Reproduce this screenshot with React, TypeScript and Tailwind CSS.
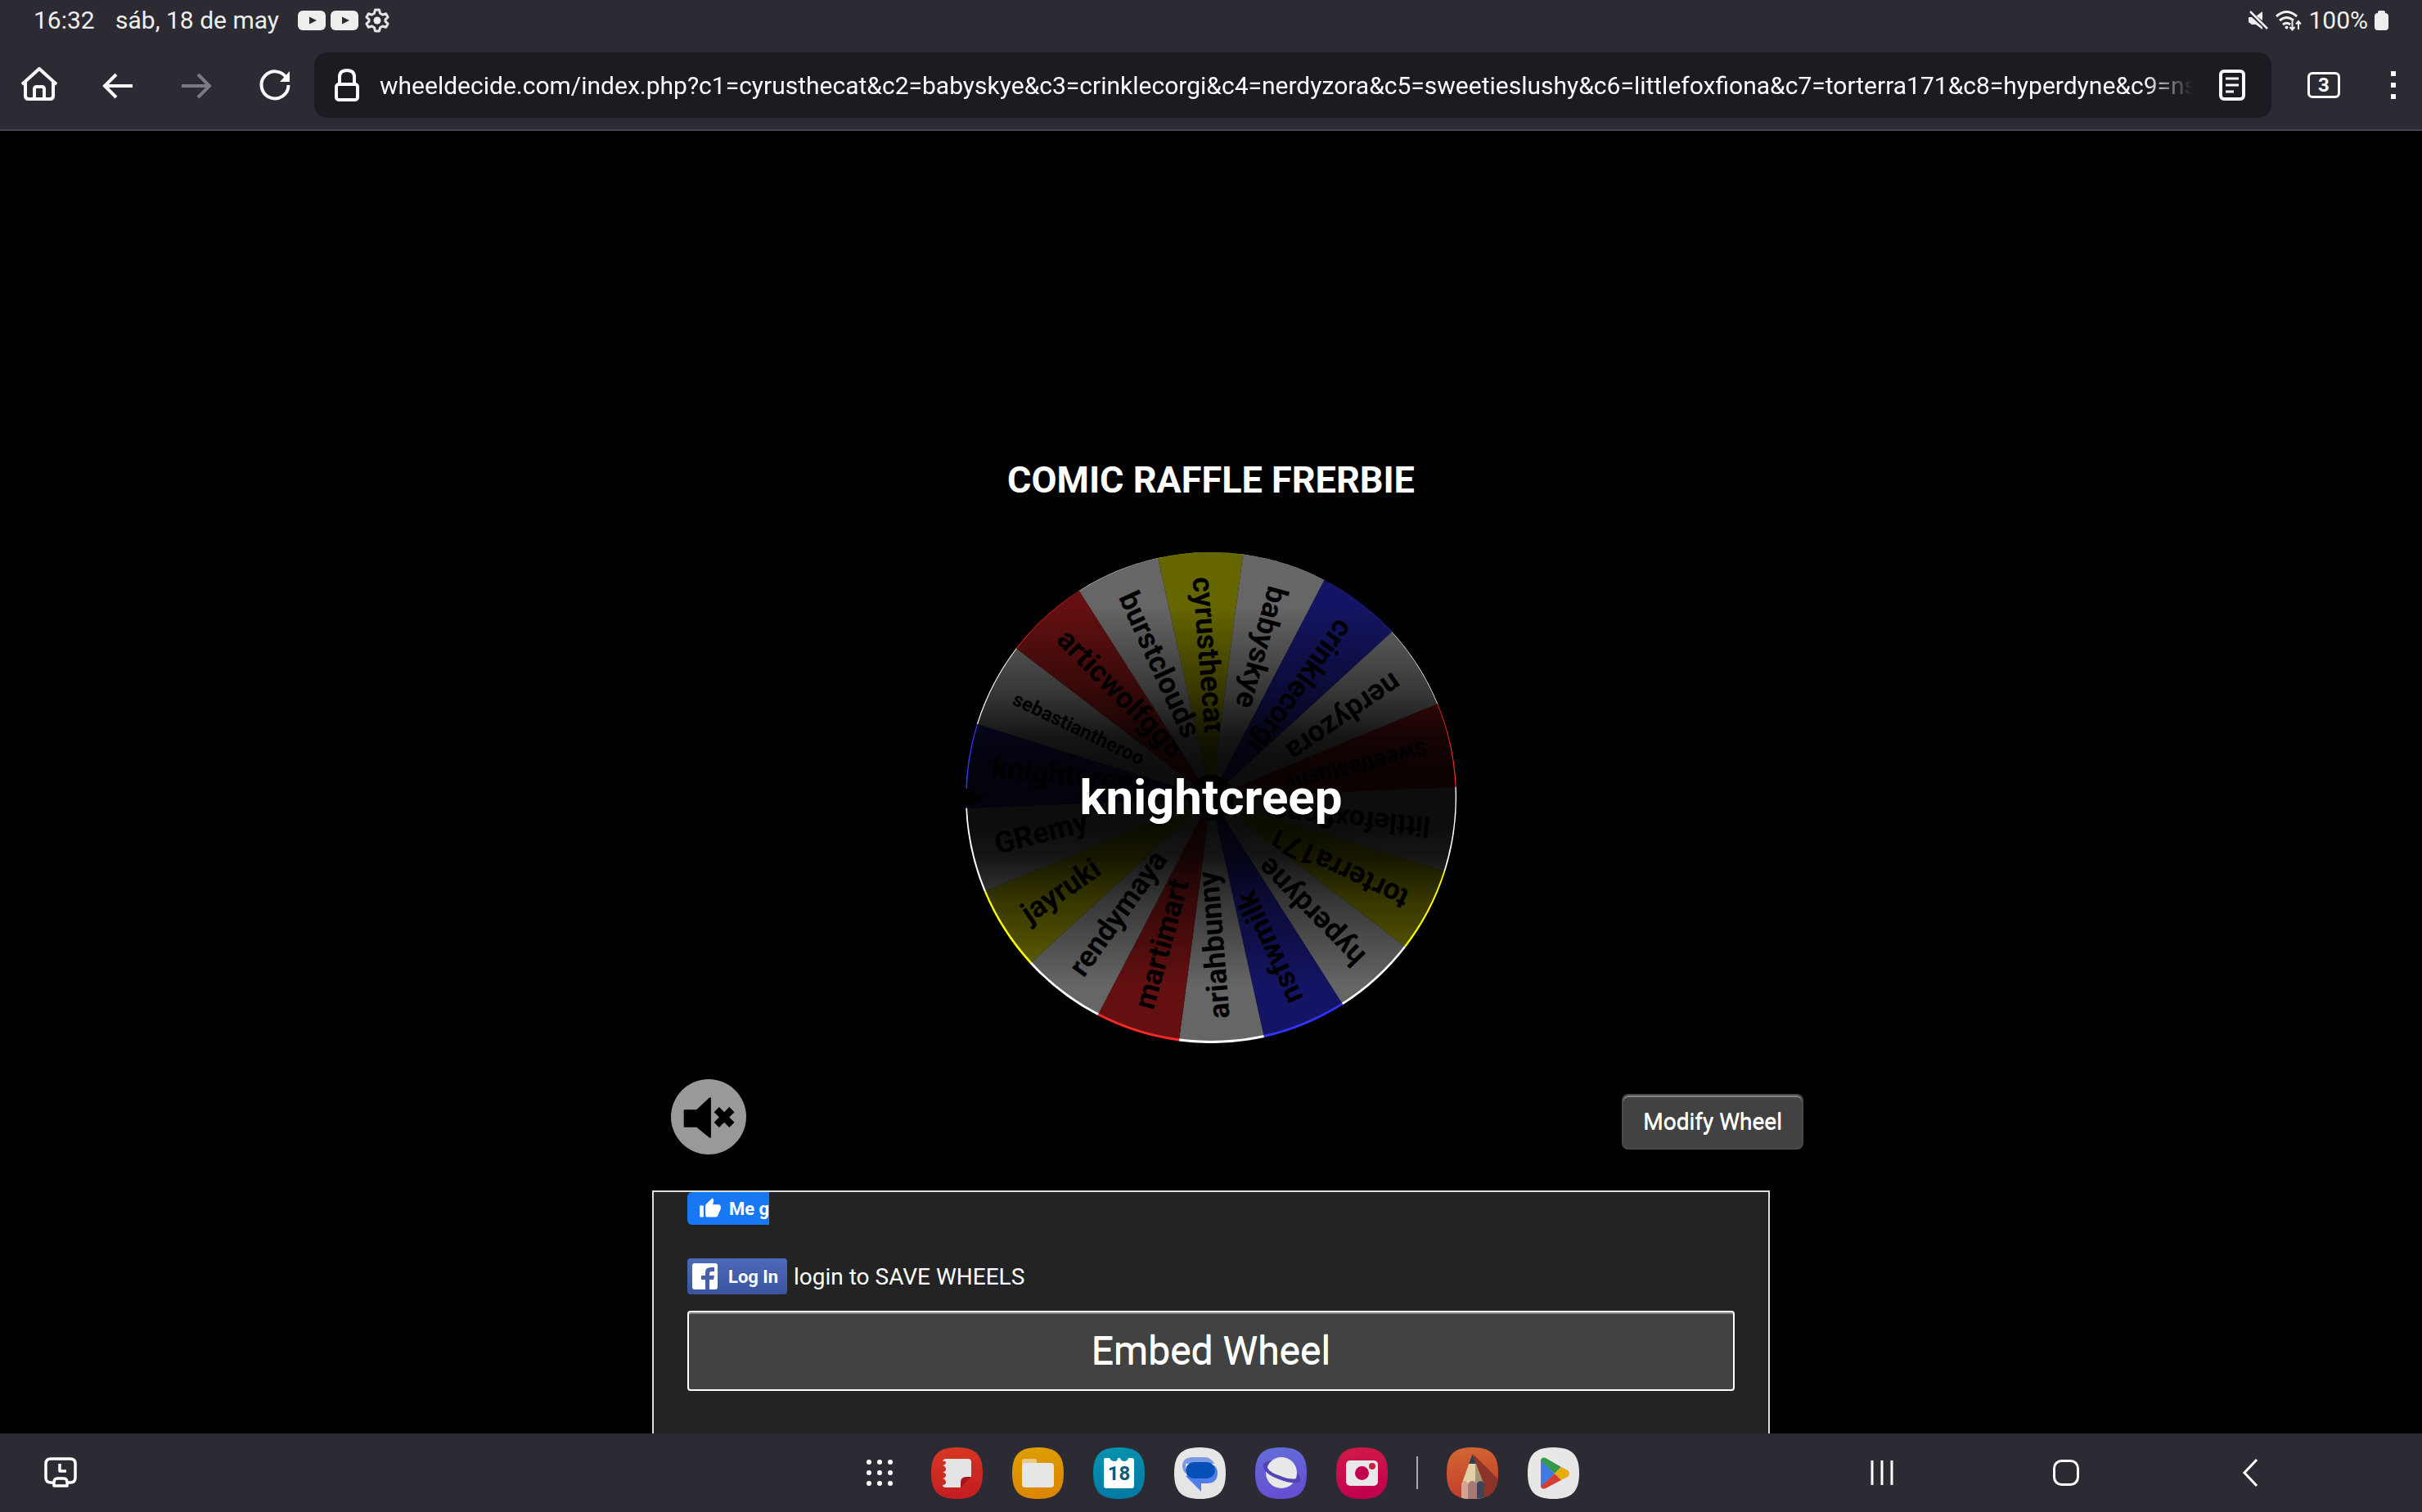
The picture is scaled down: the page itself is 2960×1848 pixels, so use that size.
import { useState } from "react";
import type { ReactNode } from "react";
import { MdThumbUp } from "react-icons/md";

interface Segment {
  name: string;
  color: string;
  size: number;
}

const YELLOW = "#ffff00";
const WHITE = "#ffffff";
const BLUE = "#3333fb";
const RED = "#fb2828";

const segments: Segment[] = [
  { name: "cyrusthecat", color: YELLOW, size: 36 },
  { name: "babyskye", color: WHITE, size: 36 },
  { name: "crinklecorgi", color: BLUE, size: 36 },
  { name: "nerdyzora", color: WHITE, size: 36 },
  { name: "sweetieslushy", color: RED, size: 28 },
  { name: "littlefoxfiona", color: WHITE, size: 34 },
  { name: "torterra171", color: YELLOW, size: 36 },
  { name: "hyperdyne", color: WHITE, size: 36 },
  { name: "nsfwmilk", color: BLUE, size: 36 },
  { name: "ariahbunny", color: WHITE, size: 36 },
  { name: "martimart", color: RED, size: 36 },
  { name: "rendymaya", color: WHITE, size: 36 },
  { name: "jayruki", color: YELLOW, size: 36 },
  { name: "GRemy", color: WHITE, size: 36 },
  { name: "knightcreep", color: BLUE, size: 36 },
  { name: "sebastiantheroo", color: WHITE, size: 24 },
  { name: "articwolfgg8", color: RED, size: 36 },
  { name: "burstclouds", color: WHITE, size: 36 },
];

const url =
  "wheeldecide.com/index.php?c1=cyrusthecat&c2=babyskye&c3=crinklecorgi&c4=nerdyzora&c5=sweetieslushy&c6=littlefoxfiona&c7=torterra171&c8=hyperdyne&c9=nsfwmilk&c10=ariahbunny";

function StatusBar() {
  return (
    <div className="flex h-12 items-center justify-between px-[41px] pt-px text-[30px] leading-none text-[#eeeeee]">
      <div className="flex items-center">
        <span className="w-[100px]">16:32</span>
        <span className="w-[223px]">sáb, 18 de may</span>
        <div className="flex items-center gap-[6px]">
          <PlayBadge />
          <PlayBadge />
          <svg width="32" height="32" viewBox="0 0 32 32" className="ml-px">
            <path
              d="M13.500 3h5l1 4.200 3 1.800 4.200-1.300 2.400 4.200L26 14.800v2.400l3.100 2.900-2.400 4.200-4.200-1.300-3 1.800-1 4.200h-5l-1-4.200-3-1.800-4.200 1.300-2.400-4.200L6 17.200v-2.400l-3.100-2.900 2.400-4.200L9.500 9l3-1.800z"
              fill="none"
              stroke="#e4e4e4"
              strokeWidth="3"
              strokeLinejoin="round"
            />
            <circle cx="16" cy="16" r="4.500" fill="#eee" />
          </svg>
        </div>
      </div>
      <div className="flex items-center">
        <svg width="24" height="24" viewBox="0 0 24 24" fill="#eee" className="mr-[9px]">
          <path d="M17 1v11L9.500 6.500zM0 8h4l13 12v3l-8-6H4l-4-3z" />
          <path d="M2 1l21 21" stroke="#eee" strokeWidth="2.500" />
        </svg>
        <svg width="32" height="26" viewBox="0 0 32 26" fill="none" stroke="#eee" strokeWidth="3" className="mr-2">
          <path d="M1 8q12.500-11 25 0M5 13q8.500-7 17 0M9 18q4.500-3.500 9 0" />
          <circle cx="13.500" cy="21.500" r="2" fill="#eee" stroke="none" />
          <path d="M20.500 14v10M17.500 21l3 3.500 3-3.500M28 24V14M25 17.500l3-3.500 3 3.500" strokeWidth="2" />
        </svg>
        <span>100%</span>
        <svg width="17" height="24" viewBox="0 0 17 24" fill="#eee" className="ml-2">
          <rect x="4" y="0" width="9" height="6" rx="2" />
          <rect y="3" width="17" height="21" rx="4" />
        </svg>
      </div>
    </div>
  );
}

function PlayBadge() {
  return (
    <svg width="34" height="24" viewBox="0 0 34 24">
      <rect width="34" height="24" rx="6" fill="#eee" />
      <path d="M14 7.500l9 4.500-9 4.500z" fill="#2c2b33" />
    </svg>
  );
}

function Toolbar() {
  const [address, setAddress] = useState(url);

  return (
    <div className="flex h-28 items-center border-b-2 border-[#47464d] pt-[2px] text-[#fbfbfe]">
      <div className="grid w-[384px] grid-cols-4">
        <ToolButton label="Inicio">
          <path d="M1 21L22 2l21 19M5 18v17q0 4 4 4h26q4 0 4-4V18M16 38V27q0-3 3-3h6q3 0 3 3v11" />
        </ToolButton>
        <ToolButton label="Atrás">
          <path d="M40 23H6M20 9L6 23l14 14" />
        </ToolButton>
        <ToolButton label="Adelante" dim>
          <path d="M4 23h34M24 9l14 14-14 14" />
        </ToolButton>
        <ToolButton label="Recargar">
          <path d="M37 15A16.500 16.500 0 1 0 38.500 22" />
          <path d="M40 5v13H28z" fill="currentColor" stroke="none" />
        </ToolButton>
      </div>
      <div className="flex h-20 flex-1 items-center rounded-2xl bg-[#1c1b22] pl-[25px] pr-8">
        <svg width="30" height="40" viewBox="0 0 30 40" fill="none" stroke="currentColor" strokeWidth="4" className="mr-[25px]">
          <path d="M6 19V10q0-8 9-8t9 8v9" />
          <rect x="2" y="19" width="26" height="19" rx="3" />
        </svg>
        <input
          type="text"
          aria-label="Dirección"
          value={address}
          onChange={(e) => setAddress(e.target.value)}
          className="h-12 min-w-0 flex-1 bg-transparent text-[30px] outline-none [mask-image:linear-gradient(to_right,black_calc(100%_-_60px),transparent)]"
        />
        <button aria-label="Modo lectura" className="ml-8">
          <svg width="32" height="38" viewBox="0 0 32 38" fill="none" stroke="currentColor" strokeWidth="4">
            <rect x="2" y="2" width="28" height="34" rx="4" />
            <path d="M8 11h16M8 19h16M8 27h10" strokeWidth="3" />
          </svg>
        </button>
      </div>
      <button
        aria-label="Pestañas"
        className="ml-11 flex h-8 w-10 items-center justify-center rounded-md border-[3px] border-[#fbfbfe] text-[24px] leading-none font-bold"
      >
        3
      </button>
      <button aria-label="Menú" className="mr-8 ml-[62px] flex flex-col gap-2">
        <span className="size-[6px] bg-[#fbfbfe]" />
        <span className="size-[6px] bg-[#fbfbfe]" />
        <span className="size-[6px] bg-[#fbfbfe]" />
      </button>
    </div>
  );
}

function ToolButton({ label, dim, children }: { label: string; dim?: boolean; children: ReactNode }) {
  return (
    <button aria-label={label} className={dim ? "flex justify-center text-[#7b7982]" : "flex justify-center"}>
      <svg width="44" height="44" viewBox="0 0 44 44" fill="none" stroke="currentColor" strokeWidth="4">
        {children}
      </svg>
    </button>
  );
}

function Wheel({ winner }: { winner: string }) {
  const step = 360 / segments.length;
  const half = (step / 2) * (Math.PI / 180);
  const x = 300 * Math.sin(half);
  const y = -300 * Math.cos(half);

  return (
    <div className="relative size-[600px]">
      <svg viewBox="-300 -300 600 600" className="size-full">
        <defs>
          <linearGradient id="shade" x1="0" y1="0" x2="0" y2="1">
            <stop offset="0.11" stopColor="#000" stopOpacity="0.6" />
            <stop offset="0.29" stopColor="#000" stopOpacity="0.79" />
            <stop offset="0.38" stopColor="#000" stopOpacity="0.92" />
            <stop offset="0.44" stopColor="#000" stopOpacity="0.95" />
            <stop offset="0.56" stopColor="#000" stopOpacity="0.95" />
            <stop offset="0.62" stopColor="#000" stopOpacity="0.92" />
            <stop offset="0.71" stopColor="#000" stopOpacity="0.79" />
            <stop offset="0.89" stopColor="#000" stopOpacity="0.6" />
          </linearGradient>
        </defs>
        {segments.map((segment, index) => (
          <g key={segment.name} transform={`rotate(${index * step - 2.5})`}>
            <path d={`M0 0L${-x} ${y}A300 300 0 0 1 ${x} ${y}Z`} fill={segment.color} />
            <text
              transform="translate(-2 -270) rotate(88)"
              y="9"
              fontSize={segment.size}
              fontWeight="700"
            >
              {segment.name}
            </text>
          </g>
        ))}
        <circle r="28" />
        <path d="M-300-12l24 12-24 12z" />
        <circle cx="0.2" cy="-1.5" r="298.5" fill="url(#shade)" />
      </svg>
      <div className="absolute inset-0 flex items-center justify-center text-[60px] leading-none font-bold text-white [text-shadow:0_0_4px_black]">
        {winner}
      </div>
    </div>
  );
}

function MuteButton() {
  return (
    <button aria-label="Mute" className="size-[92px] rounded-full bg-[#999999]">
      <svg viewBox="0 0 94 94">
        <path d="M16 39q0-1 1-1h15l16-15q2-1 2 1v48q0 2-2 1L32 60H17q-1 0-1-1z" />
        <path d="M57 38l19 19M76 38L57 57" stroke="#000" strokeWidth="9" />
      </svg>
    </button>
  );
}

function SharePanel() {
  return (
    <section className="flex-1 border-2 border-b-0 border-[#dddddd] bg-[#232323] px-[41px] text-white">
      <button className="flex h-10 w-[100px] items-center overflow-hidden rounded-l-md bg-[#1877f2] pl-[14px] text-[22px] font-bold whitespace-nowrap">
        <MdThumbUp className="mr-[9px] size-7 shrink-0" />
        Me g
      </button>
      <div className="mt-[41px] flex items-center gap-2">
        <button className="flex h-11 w-[122px] items-center gap-[13px] rounded bg-linear-to-b from-[#4c69ba] to-[#3b55a0] pl-[6px] text-[22px] font-bold [text-shadow:0_-1px_0_#354c8c]">
          <svg width="31" height="32" viewBox="0 0 31 32">
            <rect width="31" height="32" rx="3" fill="#fff" />
            <path d="M16 32V20h-5v-5h5v-4q0-6 7-6h4v5h-3q-3 0-3 3v2h6l-1 5h-5v12z" fill="#4560ad" />
          </svg>
          Log In
        </button>
        <span className="pt-[2px] text-[28px]">login to SAVE WHEELS</span>
      </div>
      <button className="mt-5 h-[98px] w-full rounded border-2 border-white bg-[#424242] text-[48px] [box-shadow:inset_0_2px_0_#858585] [text-shadow:0_1px_0_white]">
        Embed Wheel
      </button>
    </section>
  );
}

function AppIcon({ label, from, to, children }: { label: string; from: string; to: string; children: ReactNode }) {
  return (
    <button aria-label={label}>
      <svg width="63" height="63" viewBox="0 0 63 63">
        <defs>
          <linearGradient id={label} x1="0" y1="0" x2="0.2" y2="1">
            <stop stopColor={from} />
            <stop offset="1" stopColor={to} />
          </linearGradient>
          <clipPath id={`${label}-shape`}>
            <path d="M31.500 0C54 0 63 9 63 31.500S54 63 31.500 63 0 54 0 31.500 9 0 31.500 0Z" />
          </clipPath>
        </defs>
        <g clipPath={`url(#${label}-shape)`}>
          <rect width="63" height="63" fill={`url(#${label})`} />
          {children}
        </g>
      </svg>
    </button>
  );
}

function Dock() {
  return (
    <div className="flex items-center gap-9 pl-7">
      <button aria-label="Apps" className="mr-[11px] grid grid-cols-3 gap-[7px]">
        {Array.from({ length: 9 }, (_, i) => (
          <span key={i} className="size-[6px] rounded-full bg-white" />
        ))}
      </button>
      <AppIcon label="Notes" from="#d83a22" to="#c41e22">
        <path
          d="M18 14h27q4 0 4 4v18q-13 0-13 13H18q-4 0-4-3 4 0 4-3.500T14 38q4-1 4-4t-4-3.500q4-1 4-4T14 22q4-1 4-3.500T14 17q1-3 4-3z"
          fill="#e4e4e4"
        />
        <path d="M49 36L36 49v-6q0-7 7-7z" fill="#a3171c" />
      </AppIcon>
      <AppIcon label="Files" from="#dca000" to="#dc8600">
        <path d="M12 24v-7q0-3 3-3h12q3 0 3 3v5h10v5z" fill="#e8ca86" />
        <rect x="12" y="19" width="39" height="30" rx="4" fill="#e6e6e6" />
      </AppIcon>
      <AppIcon label="Calendar" from="#0494ae" to="#027ba4">
        <path d="M15 13h5q2 4 6 4t4-4h3q1 4 5 4t5-4h4q3 0 3 3v31q0 3-3 3H16q-3 0-3-3V15q0-2 2-2z" fill="#fff" />
        <text x="31.500" y="40" textAnchor="middle" fontSize="24" fontWeight="700" fill="#0b5c77">
          18
        </text>
      </AppIcon>
      <AppIcon label="Messages" from="#e8e8e8" to="#e4e4e4">
        <path d="M23 12h14q8 0 12 8H14v12q-4-4-4-9 0-11 13-11z" fill="#7b9ae2" />
        <path d="M49 22q4 4 4 9 0 13-13 13h-7v10L14 35z" fill="#507ee6" />
        <rect x="14" y="18" width="36" height="20" rx="10" fill="#0550b8" />
      </AppIcon>
      <AppIcon label="Internet" from="#636fd9" to="#654fd3">
        <circle cx="32" cy="31" r="19" fill="#e8e8e8" />
        <path
          d="M21 16q-14 2-11 9 3 8 19 14 16 6 24 4 6-3-2-12v7q-9 2-20-3Q18 31 15 25q0-5 6-9z"
          fill="#5344b3"
        />
      </AppIcon>
      <AppIcon label="Camera" from="#d11c48" to="#c2004e">
        <rect x="12" y="16" width="39" height="31" rx="5" fill="#e8e8e8" />
        <circle cx="31.500" cy="31.500" r="8.500" fill="#c2004c" />
        <circle cx="44" cy="23" r="4" fill="#cc2147" />
      </AppIcon>
      <span className="-mx-px h-10 w-[2px] bg-[#a9a9ad]" />
      <AppIcon label="Sketchbook" from="#d26a32" to="#c43c2c">
        <path d="M32 8l31 31v24H46z" fill="#8b3229" />
        <path d="M31.500 8L18 46v17h27V46z" fill="#e0cfa7" />
        <path d="M35 18l11 28H35z" fill="#a59478" />
        <path d="M31.500 8L27 20h9z" fill="#343c47" />
        <path d="M18 63V44q4-6 8 0v19z" fill="#d8a193" />
        <path d="M26 63V45q5-8 11 0v18z" fill="#a67a74" />
        <path d="M37 63V44q4-6 9 0v19z" fill="#3a4658" />
      </AppIcon>
      <AppIcon label="Play" from="#e8e8e8" to="#e6e6e6">
        <path d="M16 15v34l17-17z" fill="#3f7be0" />
        <path d="M16 16q1-5 6-3l19 11-8 8z" fill="#34994c" />
        <path d="M41 24l8 4q4 4 0 8l-8 4-8-8z" fill="#e5ac08" />
        <path d="M33 32l8 8-19 10q-5 2-6-2z" fill="#d33f32" />
      </AppIcon>
    </div>
  );
}

function NavigationBar() {
  return (
    <footer className="grid h-24 grid-cols-[1fr_auto_1fr] items-center bg-[#2c2b33]">
      <button aria-label="Vista" className="ml-[54px] w-10">
        <svg width="40" height="38" viewBox="0 0 40 38" fill="none" stroke="#fff" strokeWidth="3.500">
          <path d="M11 31H8q-6 0-6-6V8q0-6 6-6h24q6 0 6 6v17q0 6-6 6h-3" />
          <path d="M12 35q-1-9 4-9h8q5 0 4 9zM19 8v9h8" strokeLinejoin="round" />
        </svg>
      </button>
      <Dock />
      <div className="flex justify-end pr-[98px]">
        <NavButton label="Recientes">
          <path d="M6 3v30M18 3v30M30 3v30" />
        </NavButton>
        <NavButton label="Inicio">
          <rect x="3.500" y="3.500" width="29" height="29" rx="9" />
        </NavButton>
        <NavButton label="Volver">
          <path d="M26 2L11 18l15 16" />
        </NavButton>
      </div>
    </footer>
  );
}

function NavButton({ label, children }: { label: string; children: ReactNode }) {
  return (
    <button aria-label={label} className="flex w-[225px] justify-center">
      <svg width="36" height="36" viewBox="0 0 36 36" fill="none" stroke="#fff" strokeWidth="3">
        {children}
      </svg>
    </button>
  );
}

export default function App() {
  return (
    <div className="flex min-h-screen flex-col bg-black font-[Roboto,sans-serif]">
      <header className="bg-[#2c2b33]">
        <StatusBar />
        <Toolbar />
      </header>
      <main className="flex flex-1 flex-col items-center pt-[401px]">
        <h1 className="mb-[62px] text-[45px] leading-[52px] font-bold text-white">COMIC RAFFLE FRERBIE</h1>
        <Wheel winner="knightcreep" />
        <div className="flex w-full max-w-[1366px] flex-1 flex-col pt-11">
          <div className="-mr-[41px] mb-11 flex items-start justify-between pl-[23px]">
            <MuteButton />
            <button className="mt-[18px] h-[68px] rounded-lg border-2 border-[#4a4a4a] bg-[#424242] px-6 text-[28px] text-white [box-shadow:inset_0_2px_0_#858585] [text-shadow:0_1px_0_white]">
              Modify Wheel
            </button>
          </div>
          <SharePanel />
        </div>
      </main>
      <NavigationBar />
    </div>
  );
}
